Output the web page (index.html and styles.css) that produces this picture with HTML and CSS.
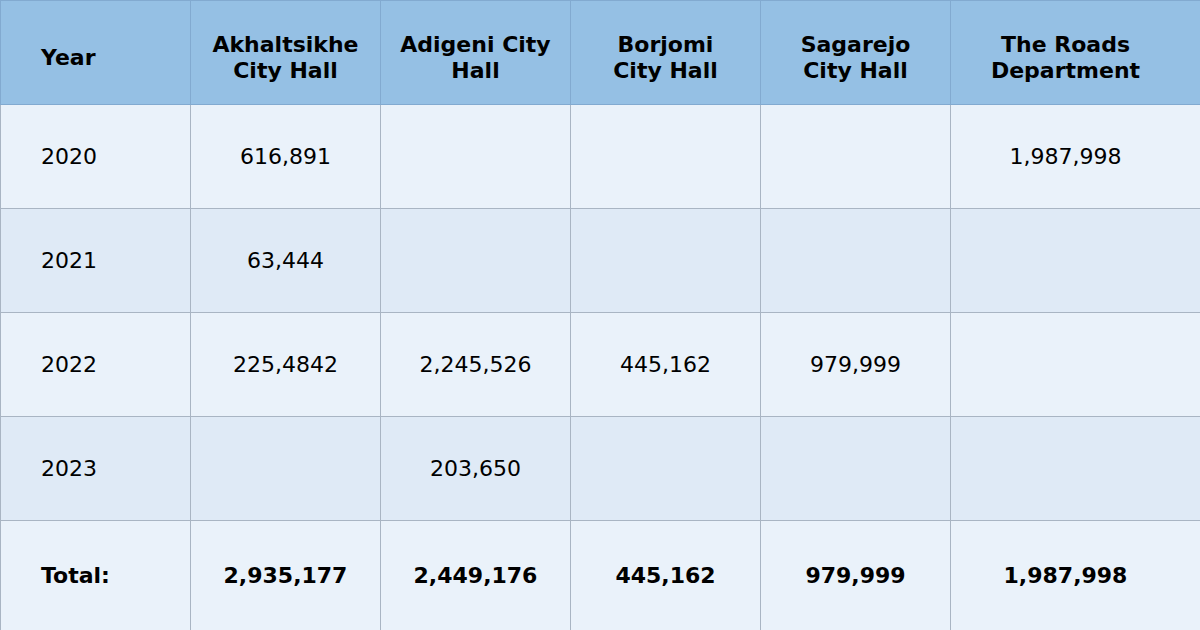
FILE: index.html
```html
<!DOCTYPE html>
<html>
<head>
<meta charset="utf-8">
<link rel="stylesheet" href="styles.css">
</head>
<body>
<table class="grid">
  <colgroup>
    <col class="c-narrow"><col class="c-narrow"><col class="c-narrow"><col class="c-narrow"><col class="c-narrow"><col class="c-wide">
  </colgroup>
  <thead>
    <tr class="head">
      <th class="first">Year</th>
      <th>Akhaltsikhe<br>City Hall</th>
      <th>Adigeni City<br>Hall</th>
      <th>Borjomi<br>City Hall</th>
      <th>Sagarejo<br>City Hall</th>
      <th class="last">The Roads<br>Department</th>
    </tr>
  </thead>
  <tbody>
    <tr class="row odd">
      <td class="first">2020</td><td>616,891</td><td></td><td></td><td></td><td class="last">1,987,998</td>
    </tr>
    <tr class="row even">
      <td class="first">2021</td><td>63,444</td><td></td><td></td><td></td><td class="last"></td>
    </tr>
    <tr class="row odd">
      <td class="first">2022</td><td>225,4842</td><td>2,245,526</td><td>445,162</td><td>979,999</td><td class="last"></td>
    </tr>
    <tr class="row even">
      <td class="first">2023</td><td></td><td>203,650</td><td></td><td></td><td class="last"></td>
    </tr>
    <tr class="total odd">
      <td class="first">Total:</td><td>2,935,177</td><td>2,449,176</td><td>445,162</td><td>979,999</td><td class="last">1,987,998</td>
    </tr>
  </tbody>
</table>
</body>
</html>
```
FILE: styles.css
```css
html, body {
  margin: 0;
  padding: 0;
  background: #eaf2fa;
}
.grid {
  width: 1200px;
  border-collapse: collapse;
  table-layout: fixed;
  font-family: "DejaVu Sans", Verdana, sans-serif;
  font-size: 22px;
  color: #000;
}
.c-narrow { width: 190px; }
.c-wide { width: 250px; }
.grid th, .grid td {
  border: 1px solid #a9b5c3;
  padding: 0;
  text-align: center;
  vertical-align: middle;
}
.grid .first {
  text-align: left;
  padding-left: 40px;
}
.grid .last {
  padding-right: 20px;
}
.head th {
  background: #95c0e4;
  font-weight: bold;
  line-height: 26px;
  height: 93px;
  padding-top: 10px;
  border-color: #82aad0;
}
.row td {
  height: 103px;
}
.odd td { background: #eaf2fa; }
.even td { background: #dfeaf6; }
.total td {
  height: 109px;
  font-weight: bold;
}
```
